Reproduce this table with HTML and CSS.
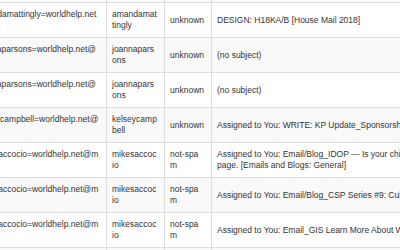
FILE: index.html
```html
<!DOCTYPE html>
<html lang="en">
<head>
<meta charset="utf-8">
<title>Messages</title>
<link rel="stylesheet" href="styles.css">
</head>
<body>
<table class="msgs">
  <colgroup>
    <col class="c-email">
    <col class="c-user">
    <col class="c-status">
    <col class="c-subject">
  </colgroup>
  <tbody>
    <tr>
      <td class="email">dianeroberts=worldhelp.net@mc</td>
      <td class="user">dianerobert s</td>
      <td class="status">unknown</td>
      <td class="subject">(no subject)</td>
    </tr>
    <tr>
      <td class="email">amandamattingly=worldhelp.net@mc</td>
      <td class="user">amandamattingly</td>
      <td class="status">unknown</td>
      <td class="subject">DESIGN: H18KA/B [House Mail 2018]</td>
    </tr>
    <tr>
      <td class="email">joannaparsons=worldhelp.net@mc</td>
      <td class="user">joannaparsons</td>
      <td class="status">unknown</td>
      <td class="subject">(no subject)</td>
    </tr>
    <tr>
      <td class="email">joannaparsons=worldhelp.net@mc</td>
      <td class="user">joannaparsons</td>
      <td class="status">unknown</td>
      <td class="subject">(no subject)</td>
    </tr>
    <tr>
      <td class="email">kelseycampbell=worldhelp.net@mc</td>
      <td class="user">kelseycampbell</td>
      <td class="status">unknown</td>
      <td class="subject">Assigned to You: WRITE: KP Update_Sponsorship Stories</td>
    </tr>
    <tr>
      <td class="email">mikesaccocio=worldhelp.net@mw</td>
      <td class="user">mikesaccocio</td>
      <td class="status">not-spam</td>
      <td class="subject">Assigned to You: Email/Blog_IDOP — Is your child's sponsor landing page. [Emails and Blogs: General]</td>
    </tr>
    <tr>
      <td class="email">mikesaccocio=worldhelp.net@mw</td>
      <td class="user">mikesaccocio</td>
      <td class="status">not-spam</td>
      <td class="subject">Assigned to You: Email/Blog_CSP Series #9: Cultivating Joy</td>
    </tr>
    <tr>
      <td class="email">mikesaccocio=worldhelp.net@mw</td>
      <td class="user">mikesaccocio</td>
      <td class="status">not-spam</td>
      <td class="subject">Assigned to You: Email_GIS Learn More About Water</td>
    </tr>
    <tr>
      <td class="email">mikesaccocio=worldhelp.net@mw</td>
      <td class="user">mikesaccocio</td>
      <td class="status">not-spam</td>
      <td class="subject">Assigned to You: Email_GIS Learn More About Water</td>
    </tr>
  </tbody>
</table>
</body>
</html>
```

FILE: styles.css
```css
html, body {
  margin: 0;
  padding: 0;
  background: #ffffff;
  overflow: hidden;
}

.msgs {
  margin-left: -30px;
  margin-top: -33px;
  border-collapse: collapse;
  table-layout: fixed;
  width: 517px;
  font-family: "Liberation Sans", Arial, sans-serif;
  font-size: 8.5px;
  line-height: 11px;
  color: #333333;
}

.c-email { width: 136px; }
.c-user { width: 58px; }
.c-status { width: 47px; }
.c-subject { width: 276px; }

.msgs td {
  border: 1px solid #dddddd;
  padding: 6px 6px 6px 5px;
  vertical-align: middle;
  text-align: left;
  word-break: break-all;
}

.msgs td.email { padding-right: 3.5px; }
.msgs td.status { padding-right: 6.5px; }
.msgs td.subject { word-break: normal; }

.msgs tbody tr:nth-child(odd) td {
  background: #f9f9f9;
}
```
